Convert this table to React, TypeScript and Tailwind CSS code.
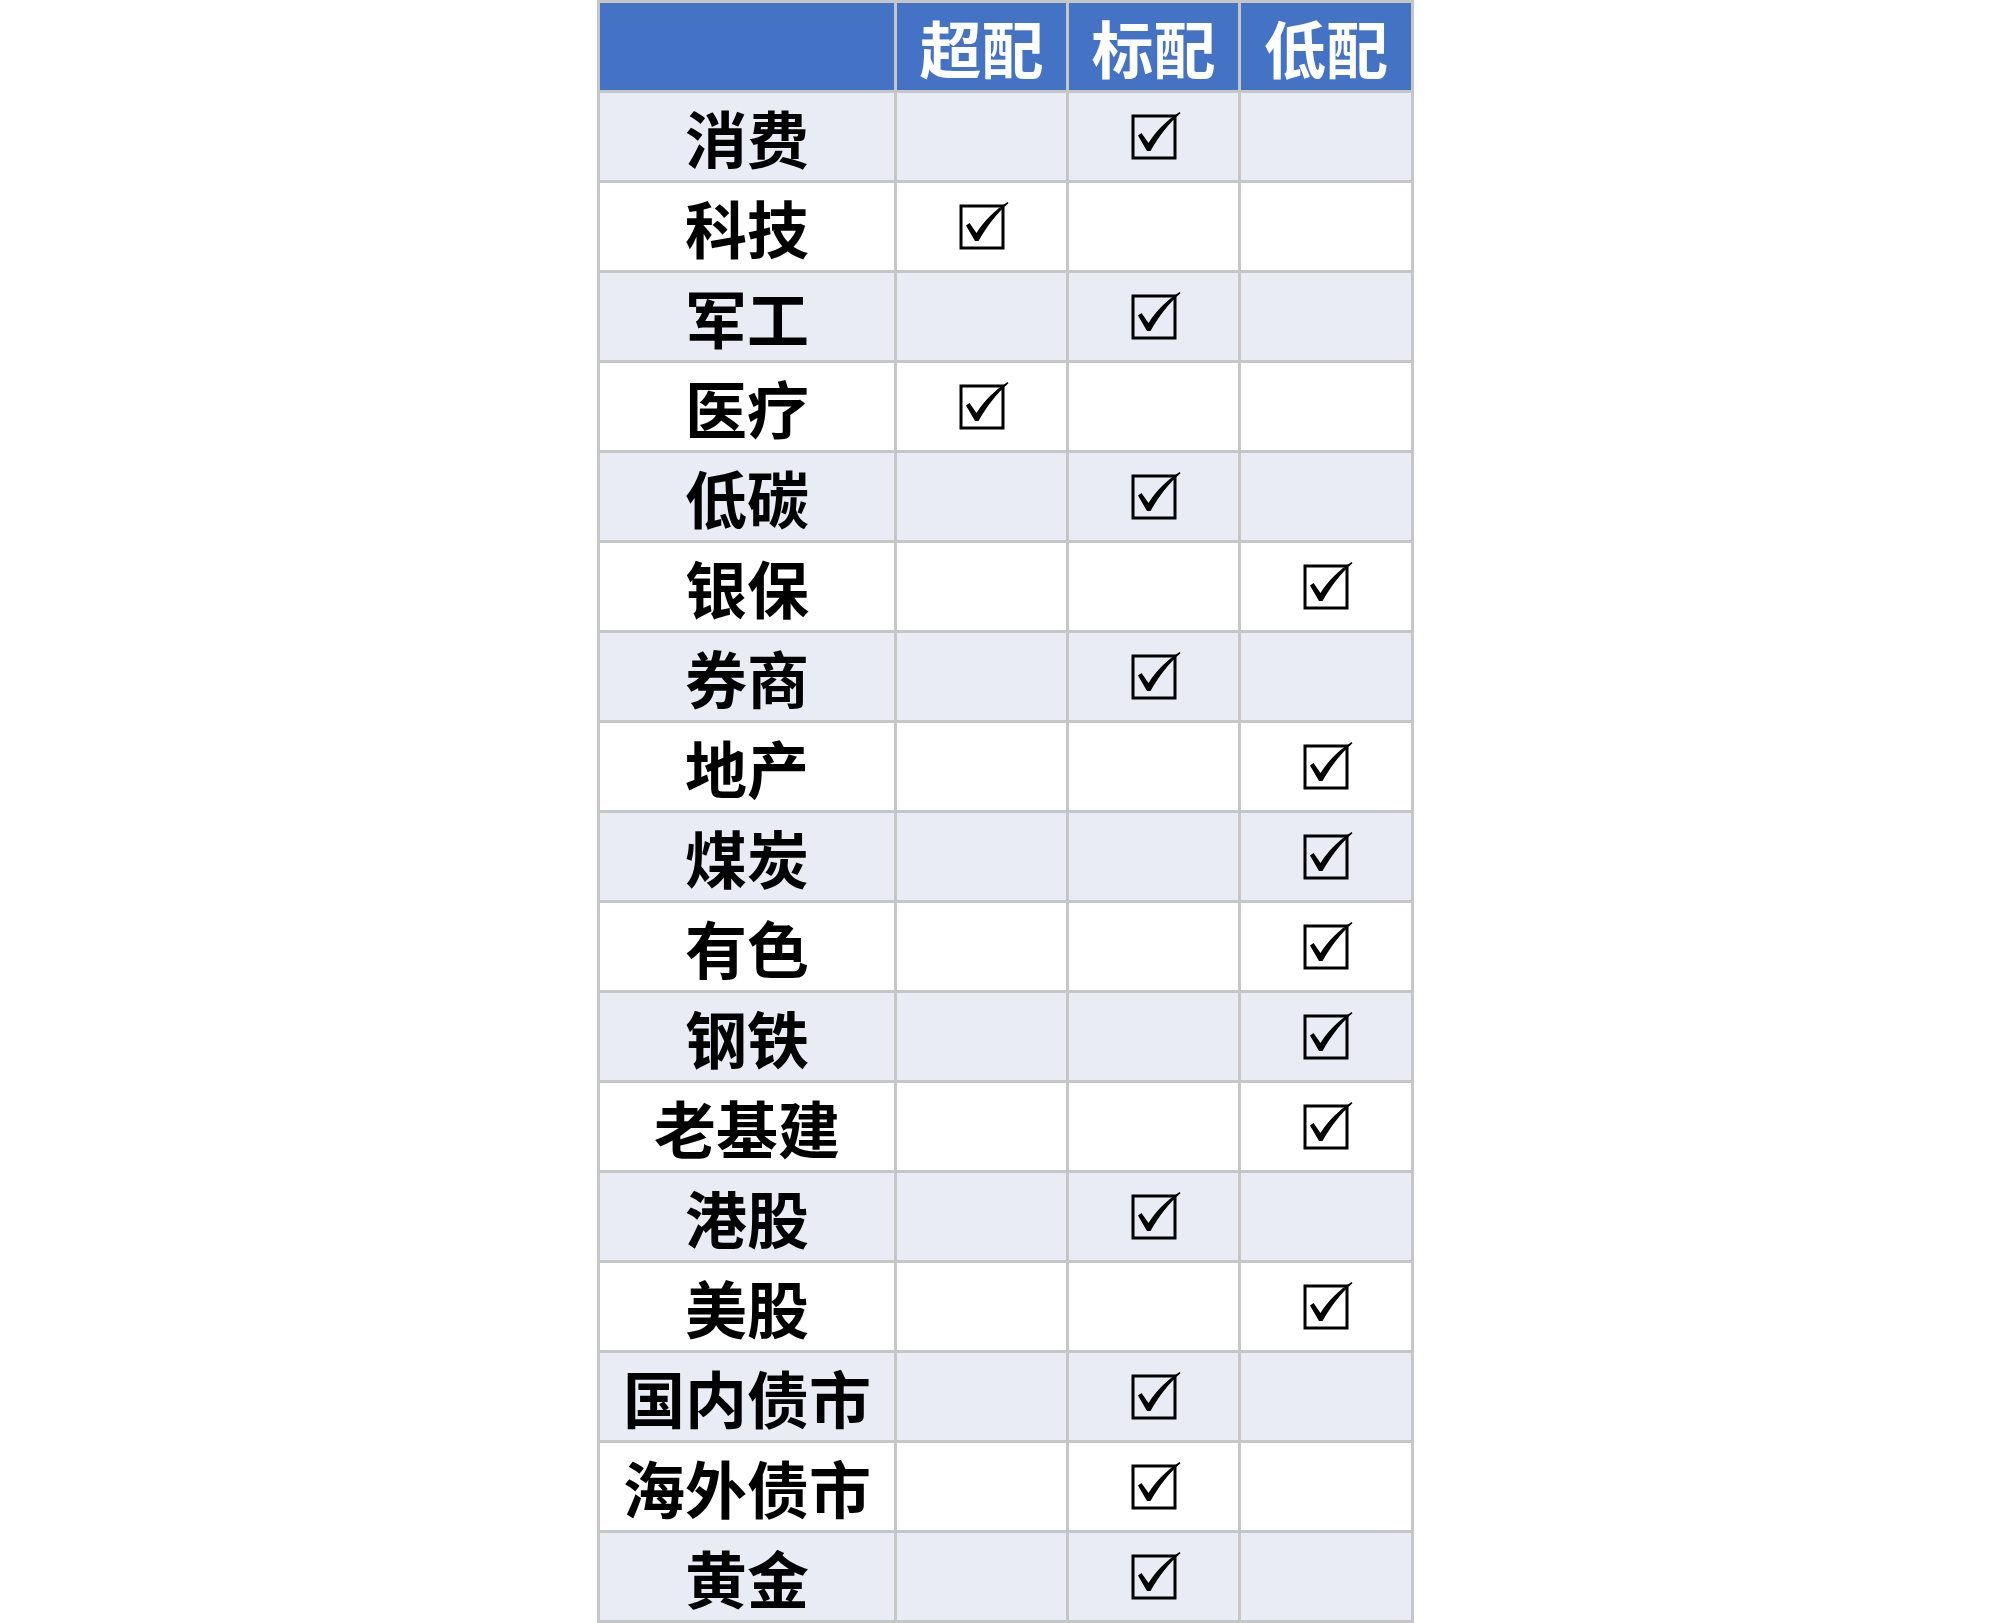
const cols = ["超配", "标配", "低配"]

// 0 = 超配, 1 = 标配, 2 = 低配
const rows: [string, number][] = [
  ["消费", 1],
  ["科技", 0],
  ["军工", 1],
  ["医疗", 0],
  ["低碳", 1],
  ["银保", 2],
  ["券商", 1],
  ["地产", 2],
  ["煤炭", 2],
  ["有色", 2],
  ["钢铁", 2],
  ["老基建", 2],
  ["港股", 1],
  ["美股", 2],
  ["国内债市", 1],
  ["海外债市", 1],
  ["黄金", 1],
]

function CheckBox() {
  return (
    <svg width="50" height="50" viewBox="0 0 50 50" className="overflow-visible">
      <rect x="4" y="4" width="42" height="42" fill="none" stroke="#000" strokeWidth="3" />
      <path
        d="M9 23.5 L12.5 21 L19.5 31 C27 19 38 8 50.5 0 L51.5 1.2 C40 11 30 24 21.5 39 L18 39 Z"
        fill="#000"
      />
    </svg>
  )
}

export default function App() {
  return (
    <div className="h-[1623px] w-full bg-white" style={{ fontFamily: '"Noto Sans CJK SC", "Noto Sans", sans-serif' }}>
      <div className="ml-[597px] inline-grid grid-cols-[294px_169px_169px_170px] auto-rows-[87px] gap-[3px] bg-[#c6c6c6] p-[3px]">
        <div className="bg-[#4472c4]" />
        {cols.map((c) => (
          <div key={c} className="flex items-center justify-center bg-[#4472c4] text-[62px] font-bold leading-none text-white">
            {c}
          </div>
        ))}
        {rows.map(([name, pick], i) => {
          const bg = i % 2 === 0 ? "bg-[#e9ebf5]" : "bg-white"
          return [
            <div key={name} className={`flex items-center justify-center text-[62px] font-bold leading-none text-black ${bg}`}>
              {name}
            </div>,
            ...cols.map((c, j) => (
              <div key={name + c} className={`flex items-center justify-center ${bg}`}>
                {pick === j && <CheckBox />}
              </div>
            )),
          ]
        })}
      </div>
    </div>
  )
}
